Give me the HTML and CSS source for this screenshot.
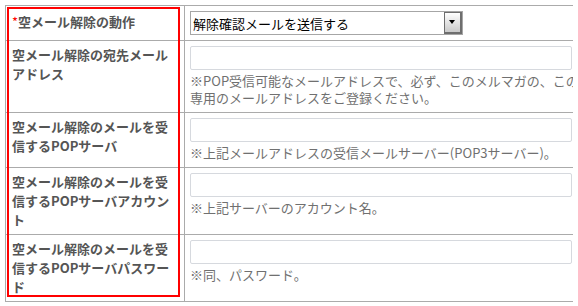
FILE: index.html
```html
<!DOCTYPE html>
<html lang="ja">
<head>
    <meta charset="UTF-8">
    <title>空メール解除の設定</title>
    <link rel="stylesheet" href="styles.css">
</head>
<body>
    <div class="page">
        <table class="settings">
            <tr class="first">
                <th><span class="req">*</span>空メール解除の動作</th>
                <td>
                    <div class="select-box">
                        <select>
                            <option>解除確認メールを送信する</option>
                            <option>すぐに解除する</option>
                        </select>
                        <span class="arrow"></span>
                    </div>
                </td>
            </tr>
            <tr>
                <th>空メール解除の宛先メールアドレス</th>
                <td>
                    <input type="text" class="field">
                    <p class="hint">※POP受信可能なメールアドレスで、必ず、このメルマガの、この空メール解除専用のメールアドレスをご登録ください。</p>
                </td>
            </tr>
            <tr>
                <th>空メール解除のメールを受信するPOPサーバ</th>
                <td>
                    <input type="text" class="field">
                    <p class="hint">※上記メールアドレスの受信メールサーバー(POP3サーバー)。</p>
                </td>
            </tr>
            <tr>
                <th>空メール解除のメールを受信するPOPサーバアカウント</th>
                <td>
                    <input type="text" class="field">
                    <p class="hint">※上記サーバーのアカウント名。</p>
                </td>
            </tr>
            <tr>
                <th>空メール解除のメールを受信するPOPサーバパスワード</th>
                <td>
                    <input type="password" class="field">
                    <p class="hint">※同、パスワード。</p>
                </td>
            </tr>
        </table>
        <div class="highlight"></div>
    </div>
</body>
</html>
```

FILE: styles.css
```css
html, body {
    overflow: hidden;
}

body {
    margin: 5px;
    background: white;
    font-family: "Noto Sans CJK JP", "Noto Sans", sans-serif;
    font-size: 13px;
}

.page {
    position: relative;
    width: 700px;
}

.settings {
    table-layout: fixed;
    width: 663px;
    border-collapse: collapse;
    border: 1px solid #ababab;
}

.settings th, .settings td {
    border: 1px solid #ababab;
    vertical-align: top;
    text-align: left;
}

.settings th {
    width: 166px;
    padding: 4px 6px 5px 6px;
    color: #555;
    font-weight: bold;
    line-height: 19px;
}

.settings tr.first th {
    padding-top: 6px;
}

.settings td {
    padding: 5px 5px 6px 5px;
}

.settings tr.first td {
    padding-bottom: 5px;
}

.req {
    color: red;
    font-weight: normal;
}

.select-box {
    display: flex;
    box-sizing: border-box;
    width: 273px;
    height: 24px;
    border: 1px solid #a6a6a6;
    background: white;
}

.select-box select {
    flex: 1;
    appearance: none;
    -webkit-appearance: none;
    border: none;
    background: transparent;
    padding: 0 0 0 2px;
    margin: 0;
    font-family: inherit;
    font-size: 13px;
    color: #000;
    outline: none;
}

.arrow {
    position: relative;
    width: 15px;
    border: 1px solid #6e6e6e;
    border-right-width: 2px;
    border-bottom-width: 2px;
    background: linear-gradient(#ffffff, #c9c9c9);
}

.arrow::after {
    content: "";
    position: absolute;
    left: 4px;
    top: 7px;
    border-left: 3.5px solid transparent;
    border-right: 3.5px solid transparent;
    border-top: 4px solid #000;
}

.field {
    display: block;
    box-sizing: border-box;
    width: 382px;
    height: 24px;
    margin: 0;
    border: 1px solid #d6d9de;
    border-radius: 2px;
    background: white;
}

.hint {
    margin: 2px 0 0 0;
    color: #707070;
    line-height: 17px;
}

.highlight {
    position: absolute;
    left: 2px;
    top: 2px;
    width: 169px;
    height: 286px;
    border: 2px solid red;
}
```
